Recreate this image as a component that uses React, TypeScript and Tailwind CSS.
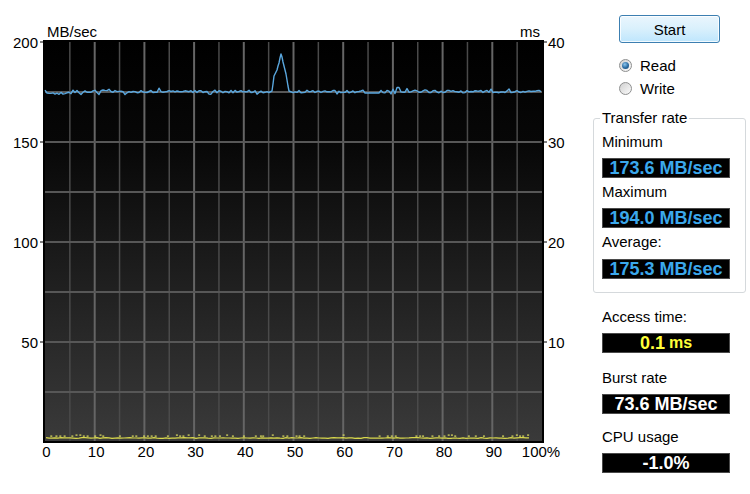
import React from "react";

function makeRng(seed: number) {
  let s = seed;
  return () => {
    s = (s * 16807) % 2147483647;
    return (s - 1) / 2147483646;
  };
}

const L = 45;
const R = 542;
const T = 42;
const B = 441;
const STEP = (R - L) / 20;

function buildBlue(): string {
  const r = makeRng(11);
  const pts: [number, number][] = [];
  for (let x = 45; x <= 542; x += 2) {
    if (x >= 271 && x <= 291) continue;
    let y = 91.5 + (r() - 0.5) * 2.6;
    if (r() < 0.1) y += r() < 0.5 ? -2 : 2;
    if (x >= 48 && x < 73) y += 2;
    if (x > 100 && x < 110) y -= 2;
    if (x >= 365 && x <= 380) y = 93;
    if (x > 395 && x < 400) y = 87.5;
    pts.push([x, y]);
  }
  const peak: [number, number][] = [
    [272, 91],
    [273, 84],
    [274, 76],
    [276, 72],
    [277, 70],
    [278, 66],
    [279, 63],
    [280, 58],
    [281, 54],
    [282, 57],
    [283, 62],
    [284, 66],
    [285, 70],
    [286, 74],
    [287, 80],
    [288, 86],
    [289, 91],
  ];
  const all = [...pts, ...peak].sort((a, b) => a[0] - b[0]);
  return all.map(([x, y]) => `${x.toFixed(1)},${y.toFixed(1)}`).join(" ");
}

function buildYellow() {
  const r = makeRng(5);
  const line: string[] = [];
  for (let x = 46; x <= 530; x += 3) {
    line.push(`${x},${(438 + (r() - 0.5) * 0.8).toFixed(1)}`);
  }
  const dots: { x: number; y: number }[] = [];
  for (let x = 46; x <= 528; x += 4) {
    if (r() < 0.5) dots.push({ x: x + r() * 2, y: 435.5 + (r() < 0.3 ? -1 : 0) });
  }
  return { line: line.join(" "), dots };
}

const BLUE = buildBlue();
const YELLOW = buildYellow();

function Chart() {
  const vLines = [] as React.ReactElement[];
  for (let i = 1; i < 20; i++) {
    const x = L + i * STEP;
    const major = i % 2 === 0;
    vLines.push(
      <line
        key={"v" + i}
        x1={x}
        x2={x}
        y1={T}
        y2={B}
        stroke={major ? "#656565" : "#4a4a4a"}
        strokeWidth={major ? 2 : 1.5}
      />
    );
  }
  const hLines = [] as React.ReactElement[];
  for (let j = 1; j < 8; j++) {
    const y = T + j * 50;
    hLines.push(<line key={"h" + j} x1={L} x2={R} y1={y} y2={y} stroke="#575757" strokeWidth={2} />);
  }
  const leftLabels = [
    ["200", 42],
    ["150", 142],
    ["100", 242],
    ["50", 342],
  ] as const;
  const rightLabels = [
    ["40", 42],
    ["30", 142],
    ["20", 242],
    ["10", 342],
  ] as const;
  const font = '"Liberation Sans", Arial, sans-serif';
  return (
    <svg width={580} height={494} className="block shrink-0">
      <defs>
        <linearGradient id="chartbg" x1="0" y1="0" x2="0" y2="1">
          <stop offset="0" stopColor="#000000" />
          <stop offset="0.25" stopColor="#070707" />
          <stop offset="1" stopColor="#3a3a3a" />
        </linearGradient>
      </defs>
      <rect x={43} y={40} width={501} height={403} fill="#000" />
      <rect x={L} y={T} width={R - L} height={B - T} fill="url(#chartbg)" />
      {vLines}
      {hLines}
      <polyline points={YELLOW.line} fill="none" stroke="#d9d94c" strokeWidth={1.2} />
      {YELLOW.dots.map((d, i) => (
        <rect key={i} x={d.x} y={d.y} width={2} height={1.2} fill="#e0e060" />
      ))}
      <polyline points={BLUE} fill="none" stroke="#5aa7de" strokeWidth={1.4} strokeLinejoin="round" />
      {leftLabels.map(([t, y]) => (
        <g key={t}>
          <text x={38} y={y + 5.5} textAnchor="end" fontFamily={font} fontSize={15} fill="#000">
            {t}
          </text>
          <line x1={40} x2={43} y1={y} y2={y} stroke="#000" strokeWidth={1} />
        </g>
      ))}
      {rightLabels.map(([t, y]) => (
        <g key={t}>
          <text x={548} y={y + 5.5} fontFamily={font} fontSize={15} fill="#000">
            {t}
          </text>
          <line x1={544} x2={547} y1={y} y2={y} stroke="#000" strokeWidth={1} />
        </g>
      ))}
      <text x={47} y={37} fontFamily={font} fontSize={15} fill="#000">
        MB/sec
      </text>
      <text x={540} y={37} textAnchor="end" fontFamily={font} fontSize={15} fill="#000">
        ms
      </text>
      {[0, 10, 20, 30, 40, 50, 60, 70, 80, 90].map((v, i) => (
        <text
          key={v}
          x={L + 1.5 + i * STEP * 2}
          y={456.5}
          textAnchor="middle"
          fontFamily={font}
          fontSize={15}
          fill="#000"
        >
          {v}
        </text>
      ))}
      <text x={541} y={456.5} textAnchor="middle" fontFamily={font} fontSize={15} fill="#000">
        100%
      </text>
    </svg>
  );
}

function Radio({ checked, label }: { checked?: boolean; label: string }) {
  return (
    <div className="flex h-[23px] items-center">
      <span className="flex h-[13px] w-[13px] items-center justify-center rounded-full border border-[#8e8f8f] bg-gradient-to-br from-[#d0d0d0] to-[#fbfbfb]">
        {checked && (
          <span className="h-[7px] w-[7px] rounded-full bg-[radial-gradient(circle_at_40%_35%,#8cc6ee,#2a6aa0_55%,#17476f)]" />
        )}
      </span>
      <span className="ml-[8px] text-[15px] leading-[16px] text-black">{label}</span>
    </div>
  );
}

function ValueBox({ children, color }: { children: React.ReactNode; color: string }) {
  return (
    <div
      className={`flex h-[20px] w-[128px] items-center justify-center border border-[#4a4a4a] bg-black text-[18px] font-bold leading-none ${color}`}
    >
      {children}
    </div>
  );
}

export default function App() {
  return (
    <div className="flex h-[494px] w-[750px] overflow-hidden bg-white font-['Liberation_Sans',Arial,sans-serif] text-black">
      <Chart />
      <div className="flex w-[170px] flex-col pt-[15px]">
        <button className="ml-[39px] flex h-[28px] w-[101px] items-center justify-center rounded-[3px] border border-[#3c7fb1] bg-gradient-to-b from-[#eaf6fd] via-[#d9f0fc] to-[#bee6fd] text-[15px] leading-none text-black shadow-[inset_0_0_0_1px_rgba(255,255,255,0.8)]">
          Start
        </button>
        <div className="ml-[39px] mt-[11px] flex flex-col">
          <Radio checked label="Read" />
          <Radio label="Write" />
        </div>
        <fieldset className="ml-[13px] mt-[10px] w-[153px] rounded-[3px] border border-[#d5d9dc] pb-[13px] pl-[8px] pt-[8px]">
          <legend className="-ml-[2px] px-[2px] text-[15px] leading-[16px]">Transfer rate</legend>
          <div className="mb-[8px] text-[15px] leading-[16px]">Minimum</div>
          <ValueBox color="text-[#3ba8ec]">173.6 MB/sec</ValueBox>
          <div className="mb-[8px] pt-[6px] text-[15px] leading-[16px]">Maximum</div>
          <ValueBox color="text-[#3ba8ec]">194.0 MB/sec</ValueBox>
          <div className="mb-[9px] pt-[6px] text-[15px] leading-[16px]">Average:</div>
          <ValueBox color="text-[#3ba8ec]">175.3 MB/sec</ValueBox>
        </fieldset>
        <div className="ml-[22px] mt-[16px] text-[15px] leading-[16px]">Access time:</div>
        <div className="ml-[22px] mt-[8px]">
          <ValueBox color="text-[#ffff3a]">
            <span>0.1</span>
            <span className="ml-[4px] text-[16px]">ms</span>
          </ValueBox>
        </div>
        <div className="ml-[22px] mt-[17px] text-[15px] leading-[16px]">Burst rate</div>
        <div className="ml-[22px] mt-[8px]">
          <ValueBox color="text-white">73.6 MB/sec</ValueBox>
        </div>
        <div className="ml-[22px] mt-[15px] text-[15px] leading-[16px]">CPU usage</div>
        <div className="ml-[22px] mt-[8px]">
          <ValueBox color="text-white">-1.0%</ValueBox>
        </div>
      </div>
    </div>
  );
}
